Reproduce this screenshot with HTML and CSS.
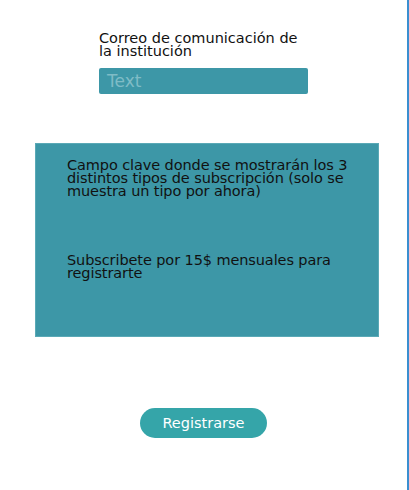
FILE: index.html
```html
<!DOCTYPE html>
<html lang="es">
<head>
<meta charset="utf-8">
<link rel="stylesheet" href="styles.css">
</head>
<body>
<div class="page">
  <div class="field">
    <div class="label">Correo de comunicación de<br>la institución</div>
    <div class="input">Text</div>
  </div>
  <div class="card">
    <p class="card-text">Campo clave donde se mostrarán los 3<br>distintos tipos de subscripción (solo se<br>muestra un tipo por ahora)</p>
    <p class="card-text second">Subscribete por 15$ mensuales para<br>registrarte</p>
  </div>
  <div class="actions">
    <div class="button">Registrarse</div>
  </div>
</div>
</body>
</html>
```

FILE: styles.css
```css
* { box-sizing: border-box; }
html, body { margin: 0; padding: 0; background: #ffffff; }
body { font-family: "DejaVu Sans", "Noto Sans", sans-serif; color: #111; }
.page {
  width: 409px;
  height: 490px;
  border-right: 2px solid #3a8fd0;
  padding-top: 32px;
}
.field { padding-left: 99px; }
.label {
  font-size: 14.5px;
  line-height: 13px;
  color: #111;
}
.input {
  margin-top: 10px;
  width: 209px;
  height: 26px;
  background: #3d97a7;
  border-radius: 2px;
  color: #7fbcc6;
  font-size: 17px;
  line-height: 26px;
  padding-left: 8px;
}
.card {
  margin: 49px 0 0 35px;
  width: 344px;
  height: 194px;
  background: #3d97a7;
  border: 1px solid #5aa9b6;
  padding: 15px 0 0 31px;
}
.card-text {
  margin: 0;
  font-size: 14.5px;
  line-height: 13px;
  letter-spacing: -0.1px;
  color: #111;
}
.card-text.second { margin-top: 56px; }
.actions { padding: 71px 0 0 140px; }
.button {
  width: 127px;
  height: 30px;
  border-radius: 15px;
  background: #35a5a9;
  color: #ffffff;
  font-size: 14.5px;
  line-height: 30px;
  text-align: center;
}
```
